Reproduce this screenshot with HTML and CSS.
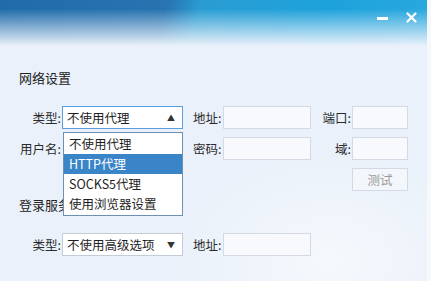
FILE: index.html
```html
<!DOCTYPE html>
<html>
<head>
    <meta charset="UTF-8">
    <title>代理设置</title>
    <link rel="stylesheet" href="styles.css">
</head>
<body>
    <div class="window">
        <div class="titlebar">
            <div class="title-buttons">
                <span class="btn-min"></span>
                <span class="btn-close">
                    <svg width="11" height="11" viewBox="0 0 11 11">
                        <path d="M1.5 1.5 L9.5 9.5 M9.5 1.5 L1.5 9.5" stroke="#fff" stroke-width="2.2" stroke-linecap="round"/>
                    </svg>
                </span>
            </div>
        </div>

        <div class="content">
            <h2 class="section-title">网络设置</h2>

            <div class="form-grid">
                <label class="lbl lbl-left">类型:</label>
                <div class="select-cell">
                    <div class="select open">
                        <span>不使用代理</span>
                        <span class="arrow">&#9650;</span>
                    </div>
                    <ul class="dropdown">
                        <li>不使用代理</li>
                        <li class="active">HTTP代理</li>
                        <li>SOCKS5代理</li>
                        <li>使用浏览器设置</li>
                    </ul>
                </div>
                <label class="lbl">地址:</label>
                <div><input class="field wide" type="text"></div>
                <label class="lbl lbl-right">端口:</label>
                <div><input class="field short" type="text"></div>

                <label class="lbl lbl-left">用户名:</label>
                <div></div>
                <label class="lbl">密码:</label>
                <div><input class="field wide" type="text"></div>
                <label class="lbl lbl-right">域:</label>
                <div><input class="field short" type="text"></div>

                <div class="span-5"></div>
                <div><button class="test-btn" disabled>测试</button></div>
            </div>

            <h2 class="section-title second">登录服务器</h2>

            <div class="form-grid">
                <label class="lbl lbl-left">类型:</label>
                <div class="select-cell">
                    <div class="select">
                        <span>不使用高级选项</span>
                        <span class="arrow">&#9660;</span>
                    </div>
                </div>
                <label class="lbl">地址:</label>
                <div><input class="field wide" type="text"></div>
            </div>
        </div>
    </div>
</body>
</html>
```

FILE: styles.css
```css
* {
    box-sizing: border-box;
}

html, body {
    margin: 0;
    padding: 0;
    width: 431px;
    height: 281px;
    overflow: hidden;
    background: #f6f9fc;
    font-family: "Noto Sans CJK SC", "Noto Sans", sans-serif;
    font-size: 12px;
    color: #2b2b2b;
}

.window {
    width: 427px;
    height: 281px;
    background:
        radial-gradient(ellipse 160px 110px at 330px 260px, rgba(255, 255, 255, 0.55), rgba(255, 255, 255, 0)),
        #eaf1fa;
    position: relative;
}

/* blue banner fading into the window body */
.titlebar {
    height: 50px;
    background:
        linear-gradient(180deg, rgba(234, 241, 250, 0) 18%, rgba(234, 241, 250, 0.5) 55%, #eaf1fa 92%),
        linear-gradient(105deg, #206caa 0%, #2873b0 38%, #2a9dd2 46%, #1ea2dc 75%, #29a8de 100%);
    display: flex;
    justify-content: flex-end;
}

.title-buttons {
    display: flex;
    align-items: flex-start;
    padding-top: 9px;
    padding-right: 10px;
    gap: 18px;
}

.btn-min {
    display: block;
    width: 11px;
    height: 3px;
    margin-top: 8px;
    background: #fff;
}

.btn-close {
    display: block;
    width: 11px;
    height: 11px;
}

.content {
    padding-left: 19px;
}

.section-title {
    margin: 20px 0 0;
    font-size: 13px;
    font-weight: normal;
    line-height: 16px;
    color: #222;
}

.section-title.second {
    margin-top: 6px;
}

.form-grid {
    display: grid;
    grid-template-columns: 43px 131px 30px 99px 30px 56px;
    grid-auto-rows: 23px;
    row-gap: 8px;
    margin-top: 20px;
    align-items: center;
}

.lbl {
    font-size: 12.5px;
    line-height: 23px;
    white-space: nowrap;
    color: #2b2b2b;
}

.lbl-left {
    text-align: right;
    padding-right: 1px;
    margin-left: -10px;
}

.lbl-right {
    text-align: right;
    padding-right: 1px;
}

.select-cell {
    position: relative;
    height: 23px;
}

.select {
    width: 121px;
    height: 23px;
    border: 1px solid #c4ccd6;
    background: #fff;
    display: flex;
    justify-content: space-between;
    align-items: center;
    padding: 0 7px 0 4px;
    font-size: 12.5px;
    color: #1e1e1e;
}

.select.open {
    border-color: #5a9ee0;
}

.arrow {
    font-size: 8px;
    color: #333;
}

.dropdown {
    position: absolute;
    top: 26px;
    left: 1px;
    width: 120px;
    margin: 0;
    padding: 1px 0;
    list-style: none;
    background: #fff;
    border: 1px solid #6f8fb4;
    z-index: 5;
}

.dropdown li {
    height: 20px;
    line-height: 20px;
    padding-left: 5px;
    font-size: 12.5px;
    color: #1e1e1e;
}

.dropdown li.active {
    background: #3a84c8;
    color: #fff;
}

.field {
    display: block;
    height: 23px;
    border: 1px solid #d3dae3;
    background: #f7f9fc;
    margin: 0;
    padding: 0;
}

.field.wide {
    width: 88px;
}

.field.short {
    width: 56px;
}

.span-5 {
    grid-column: span 5;
}

.test-btn {
    display: block;
    width: 56px;
    height: 23px;
    border: 1px solid #d3dae3;
    background: #f3f6fa;
    color: #9a9a9a;
    font-family: inherit;
    font-size: 12.5px;
    padding: 0;
}
```
